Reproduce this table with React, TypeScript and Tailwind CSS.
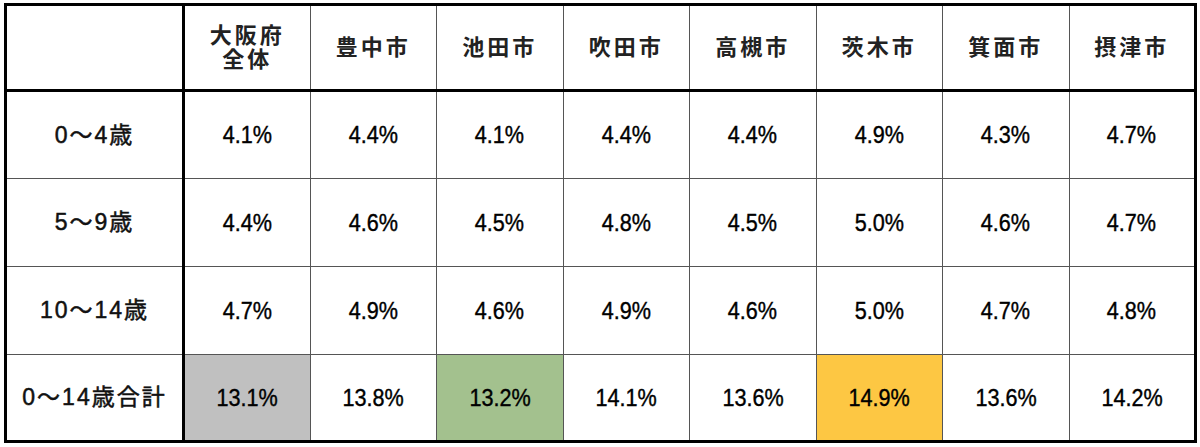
const cities = ['大阪府\n全体', '豊中市', '池田市', '吹田市', '高槻市', '茨木市', '箕面市', '摂津市'];

interface Row {
  label: string;
  values: string[];
}

const rows: Row[] = [
  { label: '0～4歳', values: ['4.1%', '4.4%', '4.1%', '4.4%', '4.4%', '4.9%', '4.3%', '4.7%'] },
  { label: '5～9歳', values: ['4.4%', '4.6%', '4.5%', '4.8%', '4.5%', '5.0%', '4.6%', '4.7%'] },
  { label: '10～14歳', values: ['4.7%', '4.9%', '4.6%', '4.9%', '4.6%', '5.0%', '4.7%', '4.8%'] },
  { label: '0～14歳合計', values: ['13.1%', '13.8%', '13.2%', '14.1%', '13.6%', '14.9%', '13.6%', '14.2%'] },
];

// highlighted cells in the total row
const totalBg: Record<number, string> = {
  0: 'bg-[#c0c0c0]',
  2: 'bg-[#a3c18e]',
  5: 'bg-[#fdc743]',
};

const font = "font-['Liberation_Sans','Noto_Sans_CJK_JP',sans-serif]";

export default function App() {
  return (
    <div className={`bg-white w-[1200px] h-[447px] pt-[3px] pl-[4px] ${font} text-[#111]`}>
      <table className="table-fixed border-collapse w-[1190px] border-[3px] border-black">
        <colgroup>
          <col className="w-[178px]" />
          {cities.map((c) => (
            <col key={c} className="w-[126.5px]" />
          ))}
        </colgroup>
        <thead>
          <tr className="h-[86px]">
            <th className="border-r-[3px] border-b-[3px] border-black" />
            {cities.map((c) => (
              <th
                key={c}
                className="border-b-[3px] border-b-black border-x-[1.5px] border-x-[#555] text-[22px] font-bold leading-[24px] tracking-[3px] whitespace-pre-line text-center text-[#222]"
              >
                {c}
              </th>
            ))}
          </tr>
        </thead>
        <tbody>
          {rows.map((r, ri) => {
            const isTotal = ri === rows.length - 1;
            return (
              <tr key={r.label} className={isTotal ? 'h-[87px]' : 'h-[88px]'}>
                <td className="border-r-[3px] border-r-black border-y-[1.5px] border-y-[#555] text-center text-[23px] text-[#111]">
                  <span className="inline-block tracking-[2px] [-webkit-text-stroke:0.5px_#111]">{r.label}</span>
                </td>
                {r.values.map((v, vi) => (
                  <td
                    key={vi}
                    className={`border-[1.5px] border-[#555] text-center text-[24px] text-black ${
                      isTotal ? totalBg[vi] ?? '' : ''
                    }`}
                  >
                    <span className="inline-block scale-x-[0.9] [-webkit-text-stroke:0.4px_#000]">{v}</span>
                  </td>
                ))}
              </tr>
            );
          })}
        </tbody>
      </table>
    </div>
  );
}
